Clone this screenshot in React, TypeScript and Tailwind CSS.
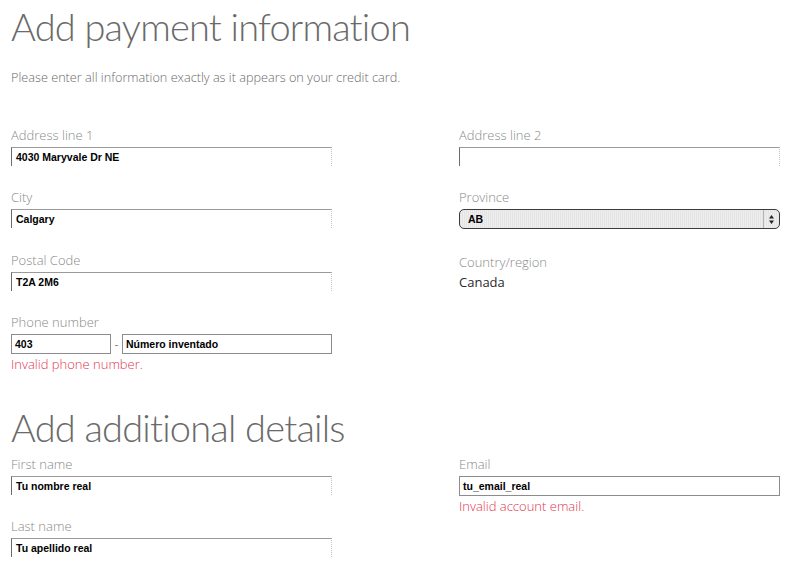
import React from 'react';

const labelCls = "block text-[13px] leading-[16px] font-light text-[#8a8a8a] mb-[4px]";
const valueFont = { fontFamily: '"Liberation Sans", "DejaVu Sans", sans-serif' };
const titleFont = { fontFamily: 'Lato, "Open Sans", sans-serif' };

function MacInput({ value, full }: { value?: string; full?: boolean }) {
  return (
    <div
      className={
        full
          ? "h-[20px] w-full border border-[#8c8c8c] bg-white pl-[3px] text-[10.5px] leading-[18px] font-bold text-black"
          : "h-[19px] w-full border-t border-l border-r border-t-[#9a9a9a] border-l-[#6b6b6b] border-r-[#c4c4c4] [border-right-style:dotted] bg-white pl-[4px] text-[10.5px] leading-[18px] font-bold text-black"
      }
      style={valueFont}
    >
      {value}
    </div>
  );
}

function Field({ label, value }: { label: string; value?: string }) {
  return (
    <div>
      <span className={labelCls}>{label}</span>
      <MacInput value={value} />
    </div>
  );
}

export default function App() {
  return (
    <div className="min-h-screen bg-white pl-[11px]" style={{ fontFamily: '"Open Sans", "Noto Sans", sans-serif' }}>
      <h1 className="pt-[2px] text-[38px] leading-[48px] font-light tracking-[-0.8px] text-[#6a6a6a]" style={titleFont}>
        Add payment information
      </h1>
      <p className="mt-[19px] text-[12.7px] leading-[16px] font-light text-[#6a6a6a]">
        Please enter all information exactly as it appears on your credit card.
      </p>

      <div className="mt-[42px] grid grid-cols-[321px_321px] gap-x-[127px] gap-y-[23px]">
        <Field label="Address line 1" value="4030 Maryvale Dr NE" />
        <Field label="Address line 2" />

        <Field label="City" value="Calgary" />
        <div>
          <span className={labelCls}>Province</span>
          <div className="flex h-[20px] w-full items-stretch overflow-hidden rounded-[5px] border border-[#3c3c3c] bg-[repeating-linear-gradient(90deg,#e4e4e4_0px,#e4e4e4_1px,#eeeeee_1px,#eeeeee_2px)]">
            <span className="flex-1 pl-[8px] text-[10.5px] leading-[18px] font-bold text-black" style={valueFont}>AB</span>
            <span className="flex w-[16px] items-center justify-center border-l border-[#b5b5b5]">
              <svg width="7" height="11" viewBox="0 0 7 11">
                <path d="M3.5 1 L6 4.5 H1 Z" fill="#222" />
                <path d="M3.5 10 L6 6.5 H1 Z" fill="#222" />
              </svg>
            </span>
          </div>
        </div>

        <Field label="Postal Code" value="T2A 2M6" />
        <div className="pt-[2px]">
          <span className={labelCls}>Country/region</span>
          <span className="block text-[13px] leading-[16px] text-[#2a2a2a]">Canada</span>
        </div>

        <div>
          <span className={labelCls}>Phone number</span>
          <div className="flex items-center">
            <div className="w-[100px]">
              <MacInput value="403" full />
            </div>
            <span className="w-[11px] text-center text-[11px] leading-[18px] text-[#666]">-</span>
            <div className="w-[210px]">
              <MacInput value="Número inventado" full />
            </div>
          </div>
          <span className="mt-[1px] block text-[13px] leading-[18px] font-light text-[#e2364f]">Invalid phone number.</span>
        </div>
        <div />
      </div>

      <h1 className="mt-[30px] text-[38px] leading-[48px] font-light tracking-[-0.8px] text-[#6a6a6a]" style={titleFont}>
        Add additional details
      </h1>

      <div className="mt-[5px] flex gap-x-[127px]">
        <div className="flex w-[321px] flex-col gap-y-[23px]">
          <Field label="First name" value="Tu nombre real" />
          <Field label="Last name" value="Tu apellido real" />
        </div>
        <div className="w-[321px]">
          <span className={labelCls}>Email</span>
          <MacInput value="tu_email_real" full />
          <span className="mt-[1px] block text-[13px] leading-[18px] font-light text-[#e2364f]">Invalid account email.</span>
        </div>
      </div>
    </div>
  );
}
